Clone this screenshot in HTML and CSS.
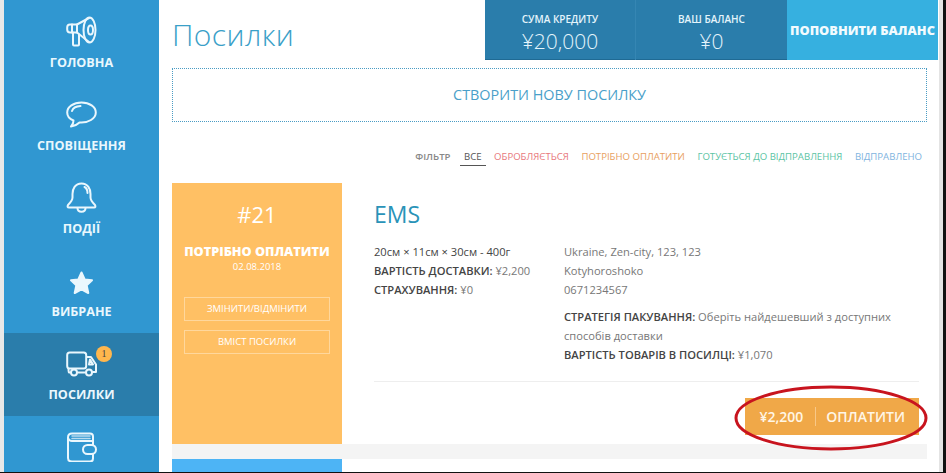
FILE: index.html
```html
<!DOCTYPE html>
<html lang="uk">

<head>
    <meta charset="UTF-8">
    <meta name="viewport" content="width=device-width, initial-scale=1.0">
    <title>Посилки</title>
    <link rel="stylesheet" href="styles.css">
</head>

<body>
    <div class="page">
        <nav class="sidebar">
            <a class="nav-item">
                <svg class="nav-icon" viewBox="0 0 31 31">
                    <ellipse cx="23.500" cy="14" rx="6" ry="12.500" />
                    <ellipse cx="24.500" cy="14" rx="2.500" ry="4.500" />
                    <path d="M23 2 L11 8.500 H4 Q1.200 8.500 1.200 11.500 V13.500 Q1.200 16.500 4 16.500 H11 L23 26" />
                    <path d="M7 16.500 V28.500 Q7 29.500 8 29.500 H12 Q13 29.500 13 28.500 V18.500" />
                    <path d="M11 8.500 V16.500 M6 8.500 V16.500" />
                </svg>
                <span>Головна</span>
            </a>
            <a class="nav-item">
                <svg class="nav-icon" viewBox="0 0 31 31">
                    <path d="M15.500 3.500 C7.500 3.500 1.200 8 1.200 13.500 C1.200 17 3.700 20 7.500 21.500 C7.500 24 6.500 26 5 27.500 C8.500 27 11.500 25.500 13.500 23.500 C22.500 24.200 29.800 19.500 29.800 13.500 C29.800 8 23.500 3.500 15.500 3.500 Z" />
                    <path d="M6 12 C7 9 10.500 7.200 14.500 7" />
                </svg>
                <span>Сповіщення</span>
            </a>
            <a class="nav-item">
                <svg class="nav-icon" viewBox="0 0 31 31">
                    <path d="M15.500 1.500 C9 1.500 6.500 7 6.500 12 V15.500 C6.500 18.500 4.500 20.500 2 23 Q0.800 25.500 3 25.500 H28 Q30.200 25.500 29 23 C26.500 20.500 24.500 18.500 24.500 15.500 V12 C24.500 7 22 1.500 15.500 1.500 Z" />
                    <path d="M11.500 26 C11.500 31 19.500 31 19.500 26" />
                    <path d="M18.500 5 C20.500 6 21.500 8 21.500 11" />
                </svg>
                <span>Події</span>
            </a>
            <a class="nav-item">
                <svg class="nav-icon nav-icon-solid" viewBox="0 0 31 31">
                    <path d="M15.500 7.500 L18.800 14.600 L26 15.300 L20.700 20.400 L22.300 28 L15.500 24.300 L8.700 28 L10.300 20.400 L5 15.300 L12.200 14.600 Z" />
                </svg>
                <span>Вибране</span>
            </a>
            <a class="nav-item active">
                <svg class="nav-icon" viewBox="0 0 31 31">
                    <rect x="1.200" y="4.500" width="19" height="16" rx="2.500" />
                    <path d="M21 9 H25 L30 16.500 V24 H27 M19 24.500 H12 M4.500 24.500 H3 Q2.500 24.500 2.500 21" />
                    <path d="M24 11.500 L27 16.500 H23 Z" />
                    <circle cx="8" cy="24.500" r="3" />
                    <circle cx="23" cy="24.500" r="3" />
                </svg>
                <b class="nav-badge">1</b>
                <span>Посилки</span>
            </a>
            <a class="nav-item">
                <svg class="nav-icon" viewBox="0 0 31 31">
                    <path d="M27 10 V5.500 Q27 2.500 24 2.500 H6 Q2 2.500 2 6.500 V27 Q2 30.500 6 30.500 H24 Q27 30.500 27 27.500 V23" />
                    <path d="M2 7 Q3 10 6 10 H27 V14" />
                    <rect x="17" y="14" width="13" height="9" rx="4.500" />
                    <path class="wallet-lines" d="M6 5 H24 M6 7.500 H24" />
                </svg>
            </a>
        </nav>

        <main class="content">
            <header class="topbar">
                <h1>Посилки</h1>
                <div class="balance-box">
                    <div class="balance-cell">
                        <div class="balance-label">Сума кредиту</div>
                        <div class="balance-value">¥20,000</div>
                    </div>
                    <div class="balance-cell">
                        <div class="balance-label">Ваш баланс</div>
                        <div class="balance-value">¥0</div>
                    </div>
                </div>
                <a class="topup">Поповнити баланс</a>
            </header>

            <a class="new-parcel">Створити нову посилку</a>

            <div class="filter">
                <span class="filter-title">Фільтр</span>
                <a class="filter-all">Все</a>
                <a class="filter-red">Обробляється</a>
                <a class="filter-orange">Потрібно оплатити</a>
                <a class="filter-green">Готується до відправлення</a>
                <a class="filter-blue">Відправлено</a>
            </div>

            <section class="parcel">
                <div class="parcel-side">
                    <div class="parcel-num">#21</div>
                    <div class="parcel-status">Потрібно оплатити</div>
                    <div class="parcel-date">02.08.2018</div>
                    <a class="side-btn">Змінити/Відмінити</a>
                    <a class="side-btn">Вміст посилки</a>
                </div>
                <div class="parcel-body">
                    <h2>EMS</h2>
                    <div class="parcel-info">
                        <div class="info-left">
                            <div class="dark">20см × 11см × 30см - 400г</div>
                            <div><b>Вартість доставки:</b> ¥2,200</div>
                            <div><b>Страхування:</b> ¥0</div>
                        </div>
                        <div class="info-right">
                            <div>Ukraine, Zen-city, 123, 123</div>
                            <div>Kotyhoroshoko</div>
                            <div>0671234567</div>
                            <p><b>Стратегія пакування:</b> Оберіть найдешевший з доступних способів доставки<br>
                                <b>Вартість товарів в посилці:</b> ¥1,070</p>
                        </div>
                    </div>
                    <div class="parcel-footer">
                        <a class="pay-btn"><span class="pay-sum">¥2,200</span><span>Оплатити</span></a>
                    </div>
                </div>
            </section>
            <div class="parcel-gap"></div>
            <div class="parcel-next"></div>
        </main>
    </div>

    <svg class="circle-mark" viewBox="0 0 946 473">
        <ellipse cx="831" cy="418" rx="95" ry="31" />
    </svg>
    <div class="right-edge"></div>
    <div class="bottom-edge"></div>
</body>

</html>
```

FILE: styles.css
```css
html,
body {
    height: 100%;
}

body {
    margin: 0;
    height: 473px;
    overflow: hidden;
    background: #fff;
    font-family: 'Open Sans', sans-serif;
    font-size: 11px;
    color: #777;
}

.page {
    display: flex;
    height: 473px;
    overflow: hidden;
}

/* left menu */
.sidebar {
    flex: none;
    width: 155px;
    margin-left: 4px;
    padding-top: 1px;
    background: #3097d1;
    box-shadow: -4px 0 0 #e8e8e8;
}

.nav-item {
    position: relative;
    display: flex;
    flex-direction: column;
    align-items: center;
    height: 83px;
    padding-top: 15px;
    box-sizing: border-box;
    color: #eaf7fd;
    font-size: 12.600px;
    font-weight: 700;
    text-transform: uppercase;
}

.nav-item.active {
    background: #2a7dab;
}

.nav-icon {
    width: 31px;
    height: 31px;
    margin-bottom: 6.500px;
    fill: none;
    stroke: #eaf7fd;
    stroke-width: 2;
    stroke-linejoin: round;
    stroke-linecap: round;
}

.nav-icon-solid {
    fill: #eaf7fd;
}

.wallet-lines {
    stroke: #b9dcee;
    stroke-width: 1.500;
}

.nav-badge {
    position: absolute;
    top: 13px;
    left: 92px;
    width: 16px;
    height: 16px;
    border-radius: 50%;
    background: #ffb74d;
    color: #444;
    font-family: 'Liberation Serif', serif;
    font-size: 10px;
    font-weight: 400;
    line-height: 16px;
    text-align: center;
}

/* main area */
.content {
    flex: 1;
    min-width: 0;
    padding: 0 19px 0 13px;
}

.topbar {
    display: flex;
    height: 60px;
}

.topbar h1 {
    flex: 1;
    margin: 12px 0 0;
    color: #3aa0c8;
    font-size: 30px;
    font-weight: 300;
    line-height: 46px;
    letter-spacing: 0.4px;
}

.balance-box {
    display: flex;
    background: #2a7dab;
    box-shadow: inset 0 -1px 0 #1f6a94;
    color: #e4f4fb;
}

.balance-cell {
    width: 150px;
    padding-top: 12px;
    box-sizing: border-box;
    text-align: center;
}

.balance-cell + .balance-cell {
    width: 152px;
    border-left: 1px solid #3586b3;
}

.balance-label {
    font-size: 10px;
    font-weight: 600;
    line-height: 14px;
    text-transform: uppercase;
}

.balance-value {
    font-size: 21px;
    font-weight: 300;
    line-height: 30px;
}

.topup {
    width: 151px;
    margin-right: -11px;
    background: #36b0e0;
    color: #f2fbfe;
    font-size: 12.800px;
    font-weight: 800;
    line-height: 60px;
    text-align: center;
    text-transform: uppercase;
    white-space: nowrap;
}

.new-parcel {
    display: block;
    height: 52px;
    margin-top: 8px;
    border: 1px dotted #4a9cc4;
    color: #4a9fc9;
    font-size: 14.400px;
    line-height: 52px;
    text-align: center;
    text-transform: uppercase;
}

.filter {
    display: flex;
    justify-content: flex-end;
    align-items: center;
    gap: 12.500px;
    height: 29px;
    margin: 20px 0 12px;
    padding-right: 5px;
    font-size: 9.600px;
    text-transform: uppercase;
    white-space: nowrap;
}

.filter-title {
    color: #888;
    font-weight: 600;
}

.filter-all {
    padding: 3px 4px 2px;
    border-bottom: 1px solid #555;
    margin: 0 -4px 0 -3px;
    color: #555;
}

.filter-red {
    color: #e8787c;
}

.filter-orange {
    color: #e8a060;
}

.filter-green {
    color: #5cc4a4;
}

.filter-blue {
    color: #7fb4e0;
}

/* parcel card */
.parcel {
    display: flex;
    height: 261px;
}

.parcel-side {
    flex: none;
    width: 170px;
    padding-top: 18px;
    box-sizing: border-box;
    background: #ffc064;
    color: #fff;
    text-align: center;
}

.parcel-num {
    font-size: 22px;
    line-height: 26px;
    margin-bottom: 16px;
}

.parcel-status {
    font-size: 12.700px;
    font-weight: 800;
    line-height: 17px;
    text-transform: uppercase;
    white-space: nowrap;
}

.parcel-date {
    font-size: 9.500px;
    line-height: 14px;
    margin-bottom: 23px;
}

.side-btn {
    display: block;
    height: 22px;
    margin: 0 12px 9px;
    border: 1px solid #ffd79c;
    font-size: 9.500px;
    line-height: 22px;
    text-transform: uppercase;
}

.parcel-body {
    flex: 1;
    padding: 18px 8px 0 32px;
    min-width: 0;
    font-size: 11.150px;
}

.parcel-body h2 {
    margin: 0 0 14px;
    color: #2a93b8;
    font-size: 23px;
    font-weight: 400;
    line-height: 27px;
}

.parcel-info {
    display: flex;
    line-height: 19px;
}

.info-left {
    width: 190px;
    flex: none;
}

.info-right {
    flex: 1;
}

.info-right p {
    margin: 8px 0 0;
}

.parcel-info b,
.dark {
    color: #444;
    font-weight: 600;
}

.parcel-info b {
    text-transform: uppercase;
}

.dark {
    font-weight: 400;
}

.parcel-footer {
    display: flex;
    justify-content: flex-end;
    margin-top: 17px;
    padding-top: 16px;
    border-top: 1px solid #eee;
}

.pay-btn {
    display: flex;
    align-items: center;
    height: 37px;
    padding: 0 14px;
    background: #f0a848;
    color: #fff6e6;
    font-size: 14px;
    font-weight: 600;
    text-transform: uppercase;
}

.pay-sum {
    padding-right: 12px;
    margin-right: 10px;
    border-right: 1px solid #f8c888;
    line-height: 19px;
}

.parcel-gap {
    height: 15px;
    background: #f4f4f4;
}

.parcel-next {
    width: 170px;
    height: 14px;
    background: #4db4f5;
}

/* screenshot marks */
.circle-mark {
    position: absolute;
    left: 0;
    top: 0;
    width: 946px;
    height: 473px;
    fill: none;
    stroke: #c8141e;
    stroke-width: 3;
}

.right-edge {
    position: absolute;
    top: 0;
    right: 0;
    width: 3px;
    height: 473px;
    border-left: 4px solid #e4e4e4;
    background: #111;
}

.bottom-edge {
    position: absolute;
    left: 0;
    bottom: 0;
    width: 946px;
    height: 1px;
    background: #111;
}
```
